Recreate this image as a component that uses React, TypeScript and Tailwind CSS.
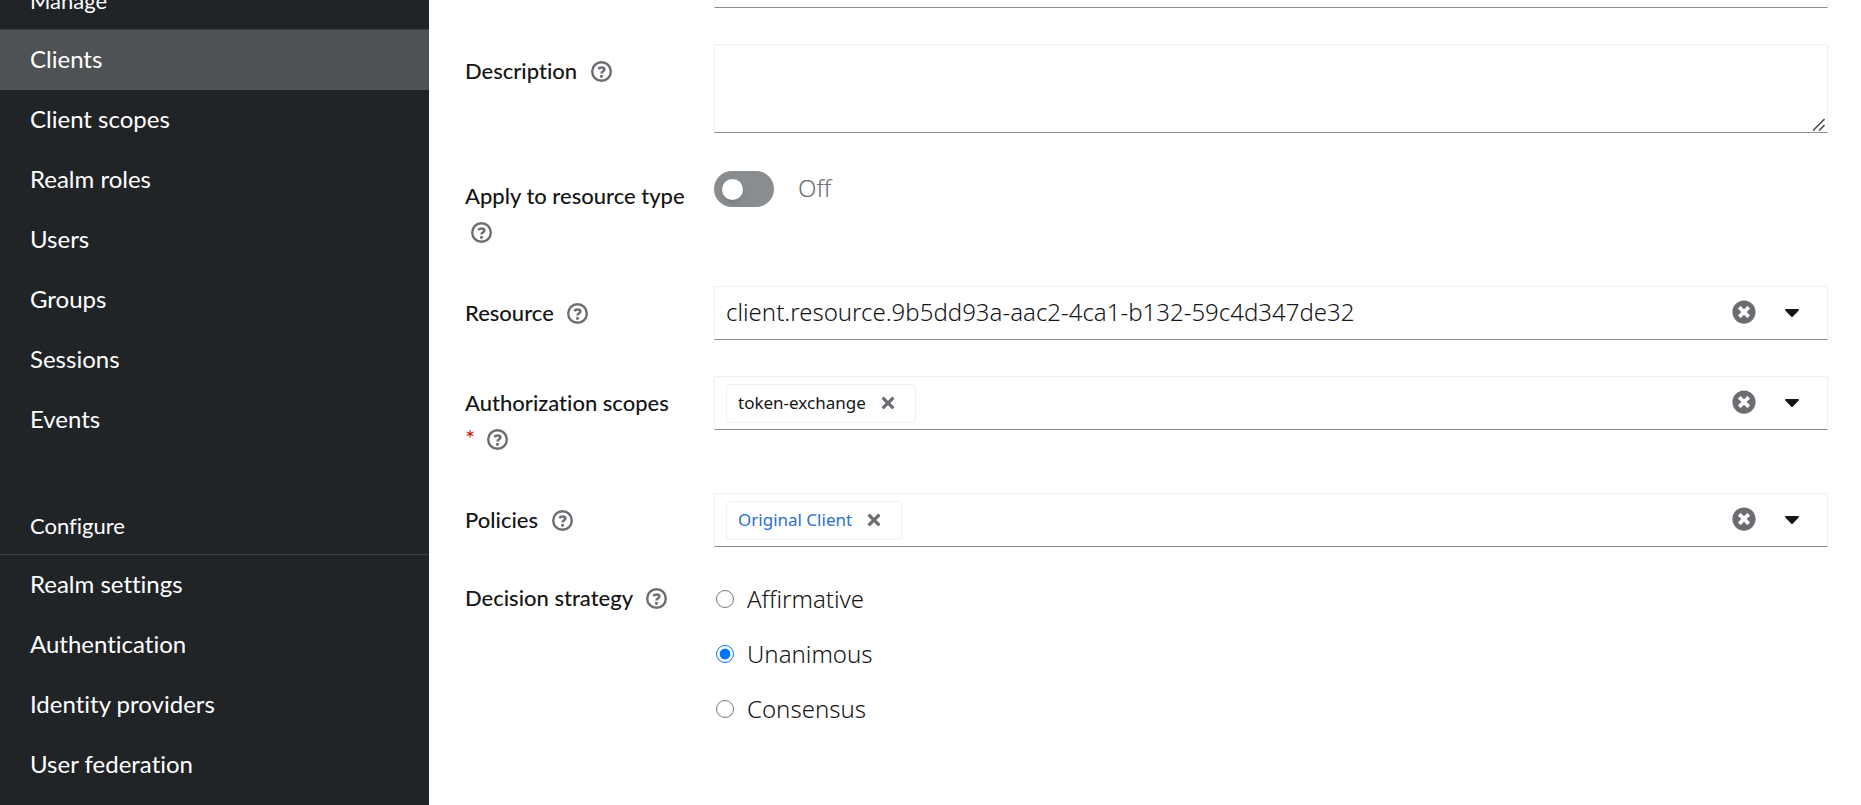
import { useState, type ReactNode } from "react";
import { FaCaretDown, FaTimes, FaTimesCircle } from "react-icons/fa";

const manageItems = [
  "Clients",
  "Client scopes",
  "Realm roles",
  "Users",
  "Groups",
  "Sessions",
  "Events",
];
const configureItems = [
  "Realm settings",
  "Authentication",
  "Identity providers",
  "User federation",
];

function NavSection({
  title,
  items,
  active,
  className,
}: {
  title: string;
  items: string[];
  active?: string;
  className: string;
}) {
  return (
    <section className={className}>
      <h2 className="border-b border-[#3c3f42] px-[30px] pb-[14px] text-[22px] leading-[29px]">
        {title}
      </h2>
      <ul>
        {items.map((item) => (
          <li key={item}>
            <a
              href="#"
              aria-current={item === active ? "page" : undefined}
              className="block px-[30px] pb-[2px] text-2xl leading-[58px] aria-[current=page]:bg-[#4f5255]"
            >
              {item}
            </a>
          </li>
        ))}
      </ul>
    </section>
  );
}

function Help({ topic, className = "ml-2" }: { topic: string; className?: string }) {
  return (
    <button
      type="button"
      aria-label={`Help for ${topic}`}
      className={`inline-block align-[-3px] text-[#6a6e73] ${className}`}
    >
      <svg viewBox="0 0 21 21" className="size-[21px]" fill="none" stroke="currentColor">
        <circle cx="10.5" cy="10.5" r="9.3" strokeWidth="2.4" />
        <path
          d="M7.4 8.1C8.1 6.9 9.1 6.4 10.6 6.4C12.2 6.4 13.4 7.2 13.4 8.5C13.4 10.4 10.5 10.2 10.5 12.6"
          strokeWidth="2.5"
        />
        <rect x="9.1" y="13.9" width="2.8" height="2.8" rx="0.6" fill="currentColor" stroke="none" />
      </svg>
    </button>
  );
}

function FieldRow({
  label,
  htmlFor,
  required,
  wrapHelp,
  children,
}: {
  label: string;
  htmlFor: string;
  required?: boolean;
  wrapHelp?: boolean;
  children: ReactNode;
}) {
  return (
    <div className="grid grid-cols-[249px_minmax(0,1fr)]">
      <div className="pt-[9px] text-[22px] leading-9 font-medium text-[#151515]">
        <label htmlFor={htmlFor}>{label}</label>{" "}
        <span className="inline-block whitespace-nowrap">
          {required && (
            <span aria-hidden="true" className="mr-1 text-2xl leading-none font-normal text-[#c9190b]">
              *
            </span>
          )}
          <Help topic={label} className={wrapHelp ? "ml-[6px]" : "ml-2"} />
        </span>
      </div>
      <div>{children}</div>
    </div>
  );
}

const boxClass = "border border-[#f0f0f0] border-b-[#8a8d90] bg-white";

function Combo({
  id,
  label,
  value,
  chip,
}: {
  id: string;
  label: string;
  value?: string;
  chip?: ReactNode;
}) {
  return (
    <div className={`flex h-[54px] items-center pl-[11px] ${boxClass}`}>
      {chip}
      <input
        id={id}
        type="text"
        defaultValue={value}
        className="min-w-0 flex-1 pb-[2px] font-['Noto_Sans',sans-serif] text-2xl font-light text-[#151515] outline-none"
      />
      <button type="button" aria-label={`Clear ${label}`} className="px-6 pb-[2px] text-[#6a6e73]">
        <FaTimesCircle className="size-6" />
      </button>
      <button type="button" aria-label={`Open ${label}`} className="pr-[23px] pb-[2px] text-[#151515]">
        <FaCaretDown className="size-6" />
      </button>
    </div>
  );
}

function Chip({ name, link }: { name: string; link?: boolean }) {
  return (
    <span className="flex h-[39px] items-center rounded-[4px] border border-[#f0f0f0] pl-[11px] font-['Noto_Sans',sans-serif] text-[17px]">
      {link ? (
        <a href="#" className="text-[#2b6fd0]">
          {name}
        </a>
      ) : (
        <span className="text-[#151515]">{name}</span>
      )}
      <button type="button" aria-label={`Remove ${name}`} className="pr-[18px] pl-[13px] text-[#6a6e73]">
        <FaTimes className="size-[18px]" />
      </button>
    </span>
  );
}

export default function App() {
  const [on, setOn] = useState(false);
  const [strategy, setStrategy] = useState("Unanimous");

  return (
    <div className="flex h-screen overflow-hidden bg-white font-['Lato',sans-serif] [font-variant-ligatures:none]">
      <nav aria-label="Main" className="w-[429px] shrink-0 bg-[#212427] text-white">
        <NavSection title="Manage" items={manageItems} active="Clients" className="-mt-[14px]" />
        <NavSection title="Configure" items={configureItems} className="mt-[61px]" />
      </nav>

      <main className="min-w-0 flex-1 pr-[33px] pl-9">
        <form className="flex flex-col gap-9">
          <div className="grid grid-cols-[249px_minmax(0,1fr)]">
            <input
              type="text"
              aria-label="Name"
              className={`col-start-2 -mt-[46px] h-[54px] px-3 text-2xl ${boxClass}`}
            />
          </div>

          <FieldRow label="Description" htmlFor="description">
            <div className="relative">
              <textarea
                id="description"
                className={`block h-[89px] w-full resize-none px-3 py-2 text-2xl outline-none ${boxClass}`}
              />
              <svg
                aria-hidden="true"
                viewBox="0 0 13 13"
                className="pointer-events-none absolute right-[3px] bottom-[2px] size-[13px]"
                stroke="#4d4d4d"
                strokeWidth="1.6"
              >
                <path d="M1 12.5 12.5 1M7 12.5 12.5 7" />
              </svg>
            </div>
          </FieldRow>

          <FieldRow label="Apply to resource type" htmlFor="apply" wrapHelp>
            <label className="mt-[2px] flex w-fit items-center gap-6">
              <input
                id="apply"
                type="checkbox"
                role="switch"
                checked={on}
                onChange={(e) => setOn(e.target.checked)}
                className="peer sr-only"
              />
              <span className="flex h-9 w-[60px] items-center rounded-full bg-[#8a8d90] px-2 peer-checked:justify-end peer-checked:bg-[#06c]">
                <span className="size-[21px] rounded-full bg-white shadow-md" />
              </span>
              <span className="pb-[2px] font-['Noto_Sans',sans-serif] text-2xl leading-[34px] font-light text-[#6a6e73]">
                {on ? "On" : "Off"}
              </span>
            </label>
          </FieldRow>

          <FieldRow label="Resource" htmlFor="resource">
            <Combo
              id="resource"
              label="Resource"
              value="client.resource.9b5dd93a-aac2-4ca1-b132-59c4d347de32"
            />
          </FieldRow>

          <FieldRow label="Authorization scopes" htmlFor="scopes" required>
            <Combo id="scopes" label="Authorization scopes" chip={<Chip name="token-exchange" />} />
          </FieldRow>

          <FieldRow label="Policies" htmlFor="policies">
            <Combo id="policies" label="Policies" chip={<Chip name="Original Client" link />} />
          </FieldRow>

          <div
            role="radiogroup"
            aria-labelledby="strategy-label"
            className="grid grid-cols-[249px_minmax(0,1fr)]"
          >
            <div className="text-[22px] leading-[30px] font-medium text-[#151515]">
              <span id="strategy-label">Decision strategy</span>{" "}
              <Help topic="Decision strategy" />
            </div>
            <div className="flex flex-col items-start gap-[23px]">
              {["Affirmative", "Unanimous", "Consensus"].map((option) => (
                <label
                  key={option}
                  className="flex items-center font-['Noto_Sans',sans-serif] text-2xl leading-8 font-light text-[#151515]"
                >
                  <input
                    type="radio"
                    name="strategy"
                    value={option}
                    checked={strategy === option}
                    onChange={() => setStrategy(option)}
                    className="mr-[13px] ml-[2px] size-[18px] accent-[#0075ff]"
                  />
                  {option}
                </label>
              ))}
            </div>
          </div>
        </form>
      </main>
    </div>
  );
}
